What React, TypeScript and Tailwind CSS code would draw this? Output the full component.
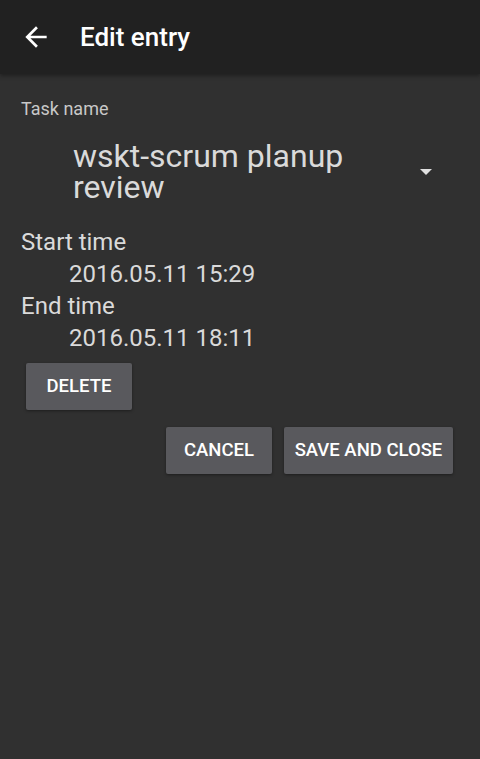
import React from 'react';

const App = () => {
	return (
		<div className="flex h-[759px] w-[480px] flex-col bg-[#303030] font-['Roboto',sans-serif]">
			<div className="flex h-[74px] items-center bg-[#212121] shadow-[0_2px_4px_rgba(0,0,0,0.35)]">
				<div className="ml-[20px] flex h-8 w-8 items-center justify-center">
					<svg width="32" height="32" viewBox="0 0 24 24" fill="#ffffff">
						<path d="M20 11H7.83l5.59-5.59L12 4l-8 8 8 8 1.41-1.41L7.83 13H20v-2z" />
					</svg>
				</div>
				<span className="ml-[28px] text-[26px] font-medium text-white">Edit entry</span>
			</div>
			<div className="flex flex-col px-[21px] pt-[24px]">
				<span className="text-[18px] leading-[22px] text-[#c8c8c8]">Task name</span>
				<div className="mt-[21px] flex items-center">
					<span className="ml-[52px] w-[320px] text-[32px] leading-[31px] text-[#dadada]">
						wskt-scrum planup review
					</span>
					<svg className="ml-[27px]" width="12" height="6" viewBox="0 0 12 6" fill="#e0e0e0">
						<path d="M0 0h12L6 6z" />
					</svg>
				</div>
				<span className="mt-[23px] text-[24px] leading-[32px] text-[#dadada]">Start time</span>
				<span className="ml-[48px] text-[24px] leading-[32px] text-[#dadada]">2016.05.11 15:29</span>
				<span className="text-[24px] leading-[32px] text-[#dadada]">End time</span>
				<span className="ml-[48px] text-[24px] leading-[32px] text-[#dadada]">2016.05.11 18:11</span>
				<div className="mt-[9px] flex">
					<button className="ml-[5px] h-[47px] w-[106px] rounded-[2px] bg-[#59595d] text-[18.5px] font-medium text-white shadow-[0_1px_3px_rgba(0,0,0,0.4)]">
						DELETE
					</button>
				</div>
				<div className="mt-[17px] flex justify-end gap-[12px] pr-[6px]">
					<button className="h-[47px] w-[106px] rounded-[2px] bg-[#59595d] text-[18.5px] font-medium text-white shadow-[0_1px_3px_rgba(0,0,0,0.4)]">
						CANCEL
					</button>
					<button className="h-[47px] w-[169px] rounded-[2px] bg-[#59595d] text-[18.5px] font-medium text-white shadow-[0_1px_3px_rgba(0,0,0,0.4)]">
						SAVE AND CLOSE
					</button>
				</div>
			</div>
		</div>
	);
};

export default App;
